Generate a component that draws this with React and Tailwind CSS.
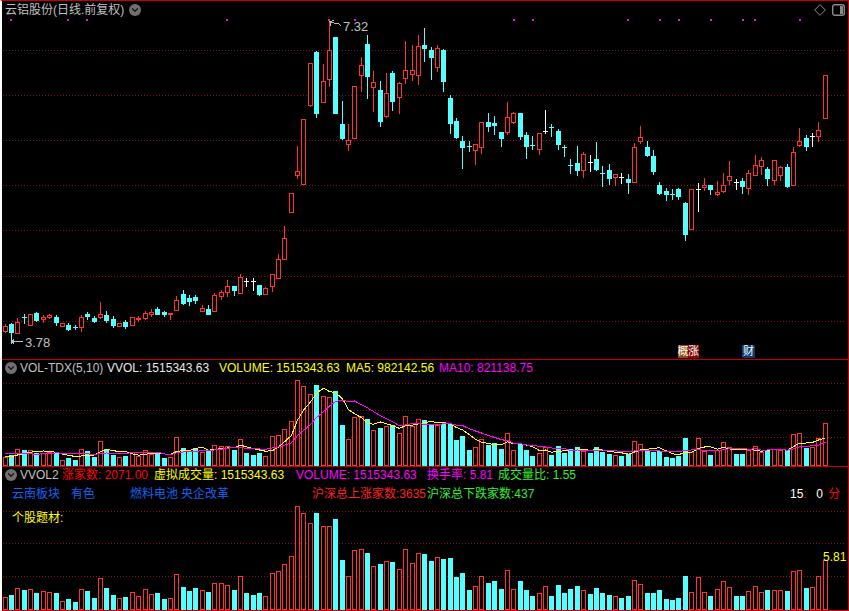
import React from 'react';
import { ChevronDown } from 'lucide-react';

const RED = '#ff3232';
const CYAN = '#54ffff';
const GRID = '#8b1010';

// kind, high, body top, body bottom, low (page y). wc / wr = white doji with a cyan / red volume bar
const candles = [
  ['r',324,326,331,332],['c',323,324,332,343],['r',318,322,333,333],['c',314,317,317,323],['r',314,314,325,325],
  ['c',312,313,320,321],['r',315,317,319,322],['r',314,315,317,318],['c',315,317,322,325],['r',323,323,326,326],
  ['c',323,325,329,330],['c',325,327,327,329],['r',315,317,327,331],['c',312,314,316,319],['c',316,318,321,322],
  ['r',302,314,317,318],['c',311,315,320,322],['c',316,319,325,327],['r',323,323,326,326],['c',320,322,326,328],
  ['r',317,317,325,325],['r',316,318,319,321],['r',311,313,318,319],['r',309,312,314,316],['c',307,309,314,314],
  ['c',311,312,314,316],['r',313,313,314,319],['r',296,300,310,310],['c',290,294,303,304],['c',295,298,301,305],
  ['c',295,297,300,303],['r',305,308,311,311],['c',305,309,314,314],['r',293,295,311,311],['r',290,292,296,299],
  ['r',280,286,292,296],['c',286,286,290,295],['r',274,277,293,293],['wc',278,281,281,286],['wc',278,281,281,290],
  ['c',285,285,294,295],['r',287,288,294,294],['r',274,274,286,291],['r',254,259,278,278],['r',226,238,259,259],
  ['r',193,193,212,212],['r',146,171,175,178],['r',119,119,184,184],['r',63,63,105,106],['c',51,52,113,117],
  ['r',64,81,102,102],['r',20,50,79,86],['c',37,37,113,113],['c',101,124,138,139],['r',124,140,144,150],
  ['r',86,86,138,138],['r',57,65,75,91],['c',35,44,76,98],['r',71,82,87,111],['c',81,90,121,126],
  ['r',73,93,116,117],['c',71,73,101,110],['r',82,83,97,113],['r',41,70,78,83],['r',45,70,74,80],
  ['r',35,46,75,84],['c',28,45,48,61],['c',47,50,57,79],['r',45,48,67,71],['c',49,50,81,91],
  ['c',95,98,123,133],['c',118,121,137,138],['c',136,141,147,168],['c',141,146,146,151],['r',144,144,150,164],
  ['r',122,122,147,153],['c',113,122,126,131],['c',116,123,125,134],['c',132,132,138,146],['r',102,117,132,134],
  ['r',112,113,122,123],['c',113,113,136,139],['c',132,135,146,158],['c',136,145,145,149],['r',133,133,149,154],
  ['wr',110,131,131,133],['c',124,127,127,136],['c',129,131,144,149],['c',145,147,147,156],['c',159,165,165,173],
  ['c',146,163,170,175],['r',152,154,170,177],['wc',155,162,162,171],['c',142,159,169,170],['c',166,173,173,186],
  ['c',164,170,178,184],['r',174,174,177,185],['wc',173,177,177,183],['c',174,179,182,193],['r',143,147,182,182],
  ['r',126,137,141,143],['c',141,147,155,156],['c',150,156,171,174],['c',182,185,193,194],['c',188,191,194,200],
  ['c',189,194,194,199],['c',188,189,196,199],['c',202,203,234,240],['r',189,189,229,229],['wr',183,189,189,211],
  ['r',178,185,187,190],['c',185,185,189,194],['r',181,192,194,195],['r',173,185,191,192],['r',161,176,180,184],
  ['wc',179,182,182,189],['c',178,181,186,193],['r',170,173,188,194],['r',155,165,175,175],['r',157,160,166,174],
  ['c',167,169,178,185],['r',160,160,180,184],['r',166,167,175,180],['c',164,167,186,187],['r',147,152,185,185],
  ['r',128,141,145,146],['c',135,138,146,150],['wr',133,136,136,146],['r',122,130,136,141],['r',75,75,118,118],
];

const volHeights = [
  8,10,16,15,15,12,12,13,12,5,7,5,16,14,8,24,16,10,8,9,13,9,15,11,13,7,8,28,17,13,17,13,14,20,19,19,15,26,12,10,12,9,29,30,36,44,85,
  79,71,80,69,68,74,40,26,48,49,46,35,37,39,40,32,49,39,46,45,40,40,41,41,25,29,15,18,26,20,22,16,32,15,21,15,9,12,18,10,19,12,16,18,
  14,12,18,13,11,10,9,11,24,21,14,13,14,8,7,9,27,13,27,14,10,15,23,18,11,11,15,19,13,15,16,15,15,31,32,17,18,27,42,
];

const wvolHeights = [
  12,14,21,19,20,16,18,17,16,8,10,7,20,18,11,31,21,14,11,12,17,13,20,15,16,10,11,35,22,18,21,19,17,26,26,24,19,33,16,14,16,13,36,38,45,53,103,
  96,86,96,83,83,90,49,33,59,60,56,43,45,48,47,40,60,46,56,55,48,52,50,51,32,36,19,23,33,26,28,20,39,20,28,19,13,16,23,13,24,16,20,23,
  19,15,21,16,14,13,11,13,29,25,16,16,19,10,9,11,33,17,32,17,13,20,28,22,13,13,18,23,17,19,19,19,18,38,39,21,22,33,49,
];

const ticks = [11, 68, 87, 227, 329, 355, 514, 533, 628, 660, 679, 711, 743, 755, 800];

const xAt = (i) => Math.floor(5.2 + (i * 820) / 129);
const isRedBar = (i) => candles[i][0] === 'r' || candles[i][0] === 'wr';

// bars that came before the visible range, so the averages start where the chart does
const prior = [15, 15, 15, 15, 15, 8, 8, 8, 8];

const average = (n) => {
  const all = [...prior, ...volHeights];
  return volHeights.map((_, i) => {
    const end = i + prior.length + 1;
    const part = all.slice(end - n, end);
    return part.reduce((a, b) => a + b, 0) / part.length;
  });
};

const Grid = ({ ys }) =>
  ys.map((y) => (
    <line key={y} x1="3" x2="845" y1={y + 0.5} y2={y + 0.5} stroke={GRID} strokeDasharray="1 2" />
  ));

const Candle = ({ c, i }) => {
  const [kind, high, top, bottom, low] = c;
  const x = xAt(i);
  const color = kind === 'r' ? RED : kind === 'c' ? CYAN : '#ffffff';
  return (
    <g>
      <line x1={x + 0.5} x2={x + 0.5} y1={high} y2={low + 1} stroke={color} />
      {top === bottom ? (
        <rect x={x - 2} y={top} width="5" height="1" fill={color} />
      ) : kind === 'c' ? (
        <rect x={x - 2} y={top} width="5" height={bottom - top + 1} fill={color} />
      ) : (
        <rect x={x - 1.5} y={top + 0.5} width="4" height={bottom - top} fill="#000" stroke={color} />
      )}
    </g>
  );
};

const Bars = ({ heights, base }) =>
  heights.map((h, i) => {
    const x = xAt(i);
    return isRedBar(i) ? (
      <rect key={i} x={x - 1.5} y={base - h + 0.5} width="4" height={h} fill="#000" stroke={RED} />
    ) : (
      <rect key={i} x={x - 2} y={base - h} width="5" height={h + 1} fill={CYAN} />
    );
  });

const MaLine = ({ n, color }) => (
  <polyline
    points={average(n).map((v, i) => `${xAt(i) + 0.5},${465 - v}`).join(' ')}
    fill="none"
    stroke={color}
  />
);

const Chevron = () => (
  <span className="flex h-3 w-3 shrink-0 items-center justify-center rounded-full bg-[#707070]">
    <ChevronDown size={10} strokeWidth={3} className="text-[#151515]" />
  </span>
);

const Tag = ({ className, children }) => (
  <span className={`flex h-[13px] items-center justify-center text-[11px] leading-none text-white ${className}`}>
    {children}
  </span>
);

export default function App() {
  return (
    <div className="flex h-[611px] w-[849px] flex-col overflow-hidden border-t border-r border-l-2 border-t-[#c80000] border-r-[#c80000] border-l-white bg-black font-['Liberation_Sans','Noto_Sans_CJK_SC',sans-serif] text-xs text-[#c0c0c0]">
      {/* price panel */}
      <div className="relative h-[359px] shrink-0 border-b border-[#c80000]">
        <svg viewBox="2 1 846 358" width="846" height="358" shapeRendering="crispEdges" className="block">
          <Grid ys={[50, 95, 140, 185, 230, 276, 321]} />
          {ticks.map((x) => (
            <rect key={x} x={x - 1} y="19" width="2" height="2" fill="#ff00ff" />
          ))}
          {candles.map((c, i) => (
            <Candle key={i} c={c} i={i} />
          ))}
          <g stroke="#c0c0c0" fill="none">
            <polyline points="330,21.5 335,23.5 338,23.5 341,25.5" />
            <polyline points="334,20.5 330,21.5 331,25.5" />
            <line x1="12" x2="23" y1="341.5" y2="341.5" />
            <polyline points="14,339.5 12,341.5 14,343.5" />
          </g>
          <text x="343" y="31" fontSize="13" fill="#c0c0c0">7.32</text>
          <text x="25" y="347" fontSize="13" fill="#c0c0c0">3.78</text>
        </svg>
        <div className="absolute top-0 right-0 left-0 flex h-[18px] items-center pr-[3px] pl-[3px]">
          <span>云铝股份(日线.前复权)</span>
          <span className="ml-[5px]">
            <Chevron />
          </span>
          <svg viewBox="0 0 12 12" width="12" height="12" className="mr-[6px] ml-auto" fill="none" stroke="#8a8a8a">
            <path d="M6 .7 11.3 6 6 11.3 .7 6Z" />
          </svg>
          <svg viewBox="0 0 13 12" width="13" height="12" fill="none">
            <rect x=".7" y=".7" width="11.6" height="10.6" rx="2" stroke="#8a8a8a" strokeWidth="1.4" />
            <rect x="8" y="2" width="3" height="8" fill="#8a8a8a" />
          </svg>
        </div>
        <div className="absolute top-[344px] left-[676px] flex">
          <Tag className="w-[10px] bg-[#8a4a10]">概</Tag>
          <Tag className="w-[11px] bg-[#8c0808]">涨</Tag>
        </div>
        <div className="absolute top-[344px] left-[740px] flex">
          <Tag className="w-[13px] bg-[#0a3a6e]">财</Tag>
        </div>
      </div>

      {/* volume panel */}
      <div className="h-[107px] shrink-0 border-b border-[#c80000]">
        <div className="flex h-[19px] items-center pb-[3px] pl-[3px] whitespace-nowrap">
          <Chevron />
          <span className="ml-[3px] w-[87px]">VOL-TDX(5,10)</span>
          <span className="w-[112px] text-[#e8e8e8]">VVOL: 1515343.63</span>
          <span className="w-[127px] text-[#ffff00]">VOLUME: 1515343.63</span>
          <span className="w-[93px] text-[#ffff00]">MA5: 982142.56</span>
          <span className="text-[#ff00ff]">MA10: 821138.75</span>
        </div>
        <svg viewBox="2 379 846 87" width="846" height="87" shapeRendering="crispEdges" className="block">
          <Grid ys={[383, 410, 437]} />
          <Bars heights={volHeights} base={465} />
          <MaLine n={5} color="#ffff00" />
          <MaLine n={10} color="#ff00ff" />
        </svg>
      </div>

      {/* second volume panel */}
      <div className="relative h-[144px] shrink-0 border-b border-[#c80000]">
        <div className="h-[39px] whitespace-nowrap">
          <div className="flex h-[16px] items-center pl-[3px]">
            <Chevron />
            <span className="ml-[3px] w-[42px]">VVOL2</span>
            <span className="w-[92px] text-[#ff0000]">涨家数: 2071.00</span>
            <span className="w-[142px] text-[#ffff00]">虚拟成交量: 1515343.63</span>
            <span className="w-[131px] text-[#ff00ff]">VOLUME: 1515343.63</span>
            <span className="w-[71px] text-[#ff00ff]">换手率: 5.81</span>
            <span className="text-[#33ee33]">成交量比: 1.55</span>
          </div>
          <div className="flex h-[21px] items-center pl-[10px]">
            <span className="w-[59px] text-[#1464f0]">云南板块</span>
            <span className="w-[59px] text-[#1464f0]">有色</span>
            <span className="w-[51px] text-[#1464f0]">燃料电池</span>
            <span className="w-[131px] text-[#1464f0]">央企改革</span>
            <span className="w-[115px] text-[#ff2020]">沪深总上涨家数:3635</span>
            <span className="w-[363px] text-[#33ee33]">沪深总下跌家数:437</span>
            <span className="text-white">15</span>
            <span className="w-[13px] text-[#ff0000]">:</span>
            <span className="w-[12px] text-white">0</span>
            <span className="text-[#ff0000]">分</span>
          </div>
        </div>
        <svg viewBox="2 506 846 104" width="846" height="104" shapeRendering="crispEdges" className="block">
          <Grid ys={[511, 543, 576]} />
          <Bars heights={wvolHeights} base={609} />
        </svg>
        <span className="absolute top-[43px] left-[10px] leading-4 text-[#ffff00]">个股题材:</span>
        <span className="absolute top-[82px] left-[821px] leading-4 text-[#ffff00]">5.81</span>
      </div>
    </div>
  );
}
